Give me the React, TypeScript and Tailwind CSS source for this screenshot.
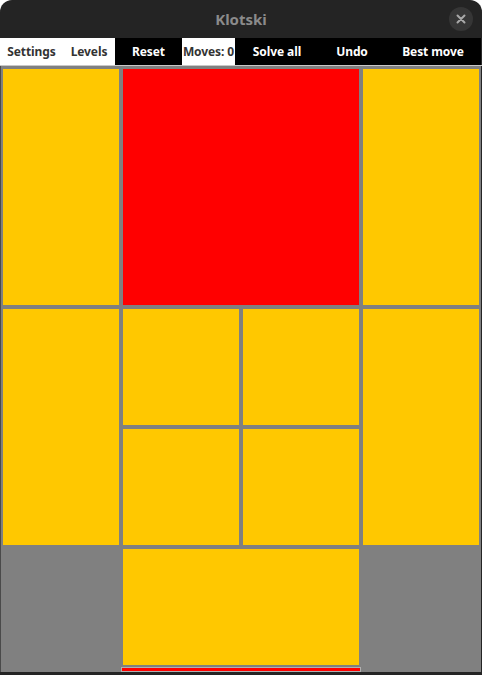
import React from "react";

type Block = { c: number; r: number; w: number; h: number; red?: boolean };

const blocks: Block[] = [
  { c: 0, r: 0, w: 1, h: 2 },
  { c: 1, r: 0, w: 2, h: 2, red: true },
  { c: 3, r: 0, w: 1, h: 2 },
  { c: 0, r: 2, w: 1, h: 2 },
  { c: 1, r: 2, w: 1, h: 1 },
  { c: 2, r: 2, w: 1, h: 1 },
  { c: 1, r: 3, w: 1, h: 1 },
  { c: 2, r: 3, w: 1, h: 1 },
  { c: 3, r: 2, w: 1, h: 2 },
  { c: 1, r: 4, w: 2, h: 1 },
];

const tools = [
  { label: "Settings", w: "w-[63px]", dark: false },
  { label: "Levels", w: "w-[52px]", dark: false },
  { label: "Reset", w: "w-[67px]", dark: true },
  { label: "Moves: 0", w: "w-[53px]", dark: false },
  { label: "Solve all", w: "w-[84px]", dark: true },
  { label: "Undo", w: "w-[66px]", dark: true },
  { label: "Best move", w: "flex-1", dark: true },
];

export default function App() {
  return (
    <div className="h-[675px] w-[483px] overflow-hidden bg-white">
      <div className="flex h-full w-[482px] flex-col overflow-hidden rounded-t-[12px] bg-[#242424]">
        <div className="relative flex h-[38px] shrink-0 items-center justify-center">
          <span className="font-['Noto_Sans',sans-serif] text-[15px] font-bold text-[#8b8b8b]">
            Klotski
          </span>
          <button className="absolute right-[9px] top-[7px] flex h-[24px] w-[24px] items-center justify-center rounded-full bg-[#363636]">
            <svg width="10" height="10" viewBox="0 0 10 10">
              <path d="M1.5 1.5 L8.5 8.5 M8.5 1.5 L1.5 8.5" stroke="#a8a8a8" strokeWidth="2" strokeLinecap="round" />
            </svg>
          </button>
        </div>
        <div className="flex h-[27px] shrink-0 font-['Noto_Sans',sans-serif] text-[12px] font-bold tracking-[-0.1px]">
          {tools.map((t) => (
            <div
              key={t.label}
              className={`flex ${t.w} items-center justify-center whitespace-nowrap ${
                t.dark ? "bg-black text-white" : "bg-white text-[#333333]"
              }`}
            >
              {t.label}
            </div>
          ))}
          <div className="w-px bg-[#2a2a2a]" />
        </div>
        <div className="min-h-0 flex-1 border-t border-[#c8c8c8] pb-[3px]">
          <div className="flex h-full w-[481px] flex-col border-l border-[#4a4a4a] bg-[#808080] pt-[1px]">
            <div className="relative h-[600px] w-[480px] shrink-0">
              {blocks.map((b, i) => (
                <div
                  key={i}
                  className={`absolute ${b.red ? "bg-[#ff0000]" : "bg-[#ffc800]"}`}
                  style={{
                    left: b.c * 120 + 2,
                    top: b.r * 120 + 2,
                    width: b.w * 120 - 4,
                    height: b.h * 120 - 4,
                  }}
                />
              ))}
            </div>
            <div className="ml-[120px] h-[5px] w-[240px] shrink-0 border border-[#b0b0b0] bg-[#ff0000]" />
          </div>
        </div>
      </div>
    </div>
  );
}
